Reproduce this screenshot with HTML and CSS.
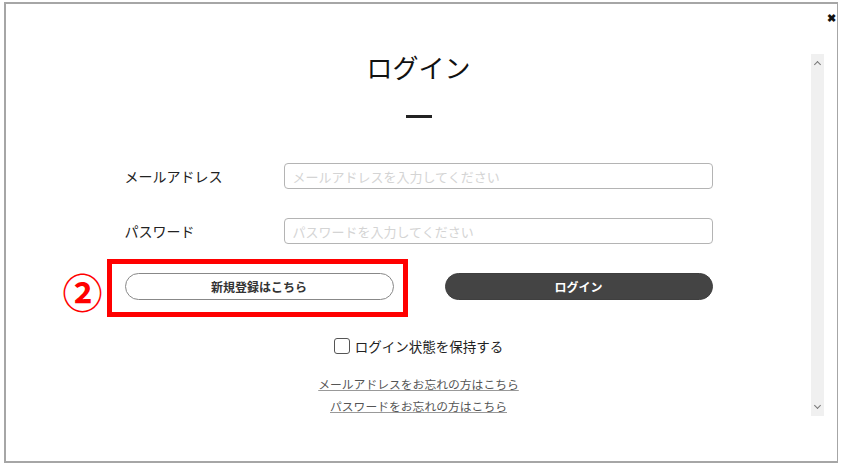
FILE: index.html
```html
<!DOCTYPE html>
<html lang="ja">
<head>
    <meta charset="UTF-8">
    <meta name="viewport" content="width=device-width, initial-scale=1.0">
    <title>ログイン</title>
    <link rel="stylesheet" href="styles.css">
</head>
<body>
    <div class="modal">
        <button class="close" type="button" aria-label="閉じる">&#x2716;</button>

        <div class="scrollbar">
            <span class="arrow up"></span>
            <span class="arrow down"></span>
        </div>

        <div class="content">
            <h1 class="title">ログイン</h1>
            <div class="dash"></div>

            <form class="login-form">
                <div class="field">
                    <label for="email">メールアドレス</label>
                    <input type="email" id="email" name="email" placeholder="メールアドレスを入力してください">
                </div>
                <div class="field">
                    <label for="password">パスワード</label>
                    <input type="password" id="password" name="password" placeholder="パスワードを入力してください">
                </div>

                <div class="buttons">
                    <div class="register-wrap">
                        <!-- 注釈 ② -->
                        <span class="mark">②</span>
                        <span class="highlight"></span>
                        <button type="button" class="btn btn-register">新規登録はこちら</button>
                    </div>
                    <button type="submit" class="btn btn-login">ログイン</button>
                </div>

                <label class="keep">
                    <input type="checkbox" name="keep">
                    <span class="box"></span>
                    ログイン状態を保持する
                </label>

                <div class="links">
                    <a href="#">メールアドレスをお忘れの方はこちら</a>
                    <a href="#">パスワードをお忘れの方はこちら</a>
                </div>
            </form>
        </div>
    </div>
</body>
</html>
```

FILE: styles.css
```css
body {
    margin: 0;
    padding: 0;
    background-color: #fff;
    font-family: "Noto Sans CJK JP", "Noto Sans", sans-serif;
    color: #222;
}
.modal {
    position: relative;
    box-sizing: border-box;
    width: 834px;
    height: 461px;
    margin: 2px 0 0 4px;
    padding: 45px 6px 0 0;
    border: 2px solid #a6a6a6;
    border-right-width: 1px;
}
.close {
    position: absolute;
    top: 9px;
    right: 1px;
    padding: 0;
    border: none;
    background: none;
    font-size: 11px;
    font-weight: bold;
    line-height: 1;
    color: #111;
    cursor: pointer;
}
.scrollbar {
    position: absolute;
    top: 50px;
    right: 13px;
    width: 13px;
    height: 362px;
    background-color: #f0f0f0;
}
.arrow {
    position: absolute;
    left: 4px;
    width: 4px;
    height: 4px;
    border-left: 1.5px solid #777;
    border-top: 1.5px solid #777;
}
.arrow.up {
    top: 8px;
    transform: rotate(45deg);
}
.arrow.down {
    bottom: 8px;
    transform: rotate(225deg);
}
.content {
    width: 588px;
    margin: 0 auto;
}
.title {
    margin: 0;
    font-size: 26px;
    font-weight: normal;
    line-height: 36px;
    text-align: center;
    color: #111;
}
.dash {
    width: 26px;
    height: 3px;
    margin: 30px auto 0;
    background-color: #222;
}
.login-form {
    margin-top: 45px;
}
.field {
    display: grid;
    grid-template-columns: 159px 1fr;
    align-items: center;
    margin-bottom: 29px;
}
.field label {
    font-size: 14px;
    color: #222;
}
.field input {
    box-sizing: border-box;
    height: 26px;
    padding: 0 8px;
    border: 1px solid #b4b4b4;
    border-radius: 4px;
    font-family: inherit;
    font-size: 13px;
}
.field input::placeholder {
    color: #d4d4d4;
}
.buttons {
    display: grid;
    grid-template-columns: 269px 268px;
    justify-content: space-between;
}
.register-wrap {
    position: relative;
    display: flex;
}
.btn {
    box-sizing: border-box;
    width: 100%;
    height: 27px;
    border-radius: 14px;
    font-family: inherit;
    font-size: 12px;
    font-weight: bold;
    cursor: pointer;
}
.btn-register {
    position: relative;
    border: 1px solid #888;
    background-color: #fff;
    color: #333;
}
.btn-login {
    border: 1px solid #3f3f3f;
    background-color: #444;
    color: #fff;
}
.highlight {
    position: absolute;
    top: -14px;
    left: -18px;
    right: -14px;
    bottom: -17px;
    border: 5px solid #f00;
}
.mark {
    position: absolute;
    top: -2px;
    left: -62px;
    font-size: 40px;
    font-weight: bold;
    line-height: 40px;
    color: #f00;
}
.keep {
    display: flex;
    align-items: center;
    justify-content: center;
    gap: 5px;
    margin-top: 36px;
    font-size: 13.5px;
    color: #222;
    cursor: pointer;
}
.keep input {
    display: none;
}
.keep .box {
    width: 14px;
    height: 14px;
    border: 1px solid #555;
    border-radius: 3px;
}
.links {
    display: flex;
    flex-direction: column;
    align-items: center;
    gap: 4px;
    margin-top: 19px;
}
.links a {
    font-size: 11.8px;
    line-height: 18px;
    color: #555;
    text-decoration: underline;
    text-decoration-color: #999;
}
```
